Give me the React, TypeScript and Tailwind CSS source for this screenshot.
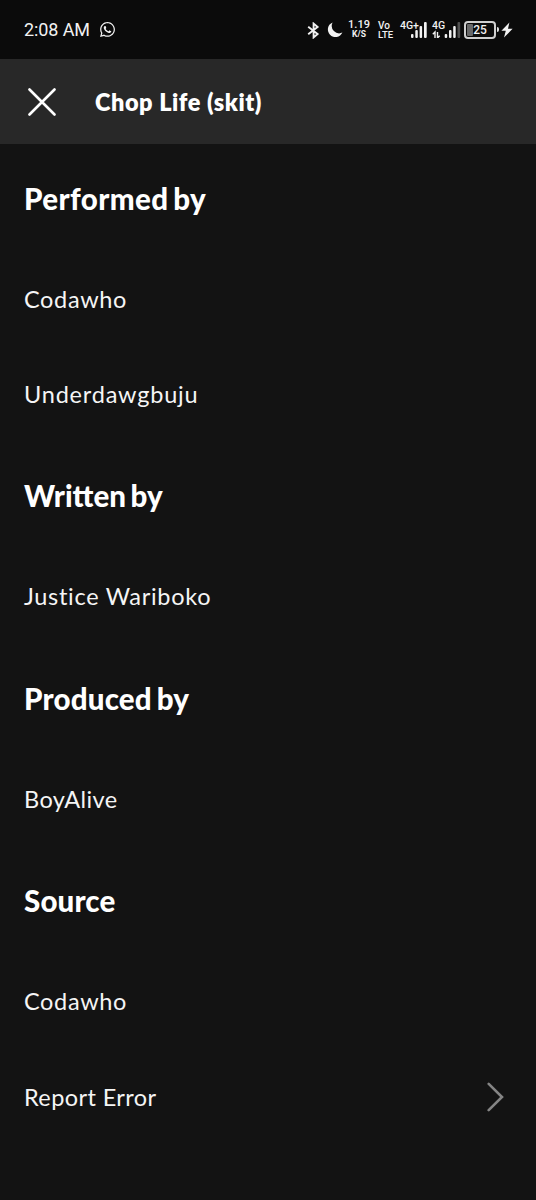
import React from "react";
import { FaWhatsapp } from "react-icons/fa";

interface CreditSection {
  title: string;
  titleClass: string;
  names: { name: string; className: string }[];
}

const sections: CreditSection[] = [
  {
    title: "Performed by",
    titleClass: "tracking-[0.4px] [word-spacing:-2.5px]",
    names: [
      { name: "Codawho", className: "tracking-[0.65px]" },
      { name: "Underdawgbuju", className: "tracking-[0.8px]" },
    ],
  },
  {
    title: "Written by",
    titleClass: "tracking-[0px] [word-spacing:-2.5px]",
    names: [{ name: "Justice Wariboko", className: "tracking-[0.7px]" }],
  },
  {
    title: "Produced by",
    titleClass: "tracking-[0.2px] [word-spacing:-2.5px]",
    names: [{ name: "BoyAlive", className: "tracking-[0.4px]" }],
  },
  {
    title: "Source",
    titleClass: "tracking-[0.15px]",
    names: [{ name: "Codawho", className: "tracking-[0.65px]" }],
  },
];

const StatusBar: React.FC = () => (
  <div className="flex h-[59px] items-center bg-[#0b0b0b] pl-6 font-[Roboto,sans-serif] text-[#f2f2f2]">
    <span className="w-[75px] whitespace-nowrap pt-px text-[18px] leading-none tracking-[-0.1px]">
      2:08 AM
    </span>
    <FaWhatsapp className="size-[17px]" />
    <div className="ml-[191px] flex h-[20px] items-start">
      {/* Bluetooth */}
      <svg width="13" height="17" viewBox="0 0 13 17" className="mt-[2px]" fill="none" stroke="currentColor" strokeWidth="1.9">
        <path d="M1.2 4.7 10.6 12 6.6 15.4V1.6L10.6 5 1.2 12.3" />
      </svg>
      {/* Do not disturb */}
      <svg width="16" height="16" viewBox="0 0 16 16" className="ml-[7px] mt-[2px]" fill="currentColor">
        <path d="M5.6.4A7.6 7.6 0 1 0 15.4 10.6 7.5 7.5 0 0 1 5.6.4Z" />
      </svg>
      <div className="ml-[5px] flex w-[22px] flex-col items-center font-medium">
        <span className="text-[11px] leading-[10px]">1.19</span>
        <span className="text-[8.5px] font-bold leading-[9px]">K/S</span>
      </div>
      <div className="ml-[8px] mt-[1px] flex w-[16px] flex-col font-medium">
        <span className="text-[10px] leading-[9px]">Vo</span>
        <span className="text-[9.5px] leading-[9px]">LTE</span>
      </div>
      {/* First SIM */}
      <div className="relative ml-[6px] h-[18px] w-[27px]">
        <span className="absolute left-0 top-[1px] text-[10.5px] font-medium leading-[10px]">
          4G+
        </span>
        <svg width="27" height="16" viewBox="0 0 27 16" className="absolute left-0 top-[2px]" fill="currentColor">
          <rect x="11" y="12" width="2.5" height="4" rx="1" />
          <rect x="15.3" y="8" width="2.5" height="8" rx="1" />
          <rect x="19.6" y="4" width="2.5" height="12" rx="1" />
          <rect x="24" y="0" width="2.7" height="16" rx="1" />
        </svg>
      </div>
      {/* Second SIM */}
      <div className="relative ml-[5px] h-[18px] w-[29px]">
        <span className="absolute left-0 top-[1px] text-[10.5px] font-medium leading-[10px]">
          4G
        </span>
        <svg width="29" height="16" viewBox="0 0 29 16" className="absolute left-0 top-[2px]" fill="currentColor">
          <path d="M3 16v-6L.8 12.2M5.5 10v6l2.2-2.2" fill="none" stroke="currentColor" strokeWidth="1.4" />
          <rect x="12.7" y="12" width="2.5" height="4" rx="1" />
          <rect x="17" y="8" width="2.5" height="8" rx="1" />
          <rect x="21.2" y="4" width="2.5" height="12" rx="1" />
          <rect x="25.5" y="0" width="2.7" height="16" rx="1" opacity="0.3" />
        </svg>
      </div>
      {/* Battery */}
      <div className="relative ml-[3px] mt-[1px] flex h-[18px] w-[32px] items-center justify-center rounded-[4px] border-2 border-[#d0d0d0]">
        <div className="absolute left-[1px] top-[1px] h-[12px] w-[6px] rounded-[1px] bg-[#686868]" />
        <span className="relative text-[12px] font-medium leading-none">25</span>
      </div>
      <div className="ml-[1px] mt-[7px] h-[5px] w-[2px] rounded-r bg-[#e0e0e0]" />
      <svg width="12" height="16" viewBox="0 0 12 16" className="ml-[2px] mt-[2px]" fill="currentColor">
        <path d="M8.4.4.4 8.8h4.4L3 15.6l8.6-8.8H7Z" />
      </svg>
    </div>
  </div>
);

const App: React.FC = () => {
  return (
    <div className="flex h-[1200px] w-[536px] flex-col overflow-hidden bg-[#131313] font-[Lato,sans-serif] text-white">
      <StatusBar />
      <header className="flex h-[85px] shrink-0 items-center bg-[#282828] pl-7">
        <button type="button" aria-label="Close">
          <svg width="28" height="28" viewBox="0 0 28 28" fill="none" stroke="currentColor" strokeWidth="2.6" strokeLinecap="round">
            <path d="m1.5 1.5 25 25M26.5 1.5l-25 25" />
          </svg>
        </button>
        <h1 className="ml-[39px] whitespace-nowrap pt-[2px] text-[23.5px] font-extrabold leading-none tracking-[0.55px]">
          Chop Life (skit)
        </h1>
      </header>
      <main className="px-6">
        {sections.map((section) => (
          <section key={section.title}>
            <h2 className="flex h-[107.3px] items-center pt-[2px] text-[29.5px] font-black">
              <span className={section.titleClass}>{section.title}</span>
            </h2>
            {section.names.map((item) => (
              <div
                key={item.name}
                className="flex h-[95.2px] items-center pt-px text-[23.5px] text-[#f5f5f5]"
              >
                <span className={item.className}>{item.name}</span>
              </div>
            ))}
          </section>
        ))}
        <div className="flex h-[95.2px] items-center justify-between pr-2 text-[23.5px] text-[#f5f5f5]">
          <span className="pt-px tracking-[0.4px]">Report Error</span>
          <svg width="17" height="30" viewBox="0 0 17 30" fill="none" stroke="#858585" strokeWidth="2.6" strokeLinecap="round">
            <path d="M1.7 1.8 15 15 1.7 28.2" />
          </svg>
        </div>
      </main>
    </div>
  );
};

export default App;
